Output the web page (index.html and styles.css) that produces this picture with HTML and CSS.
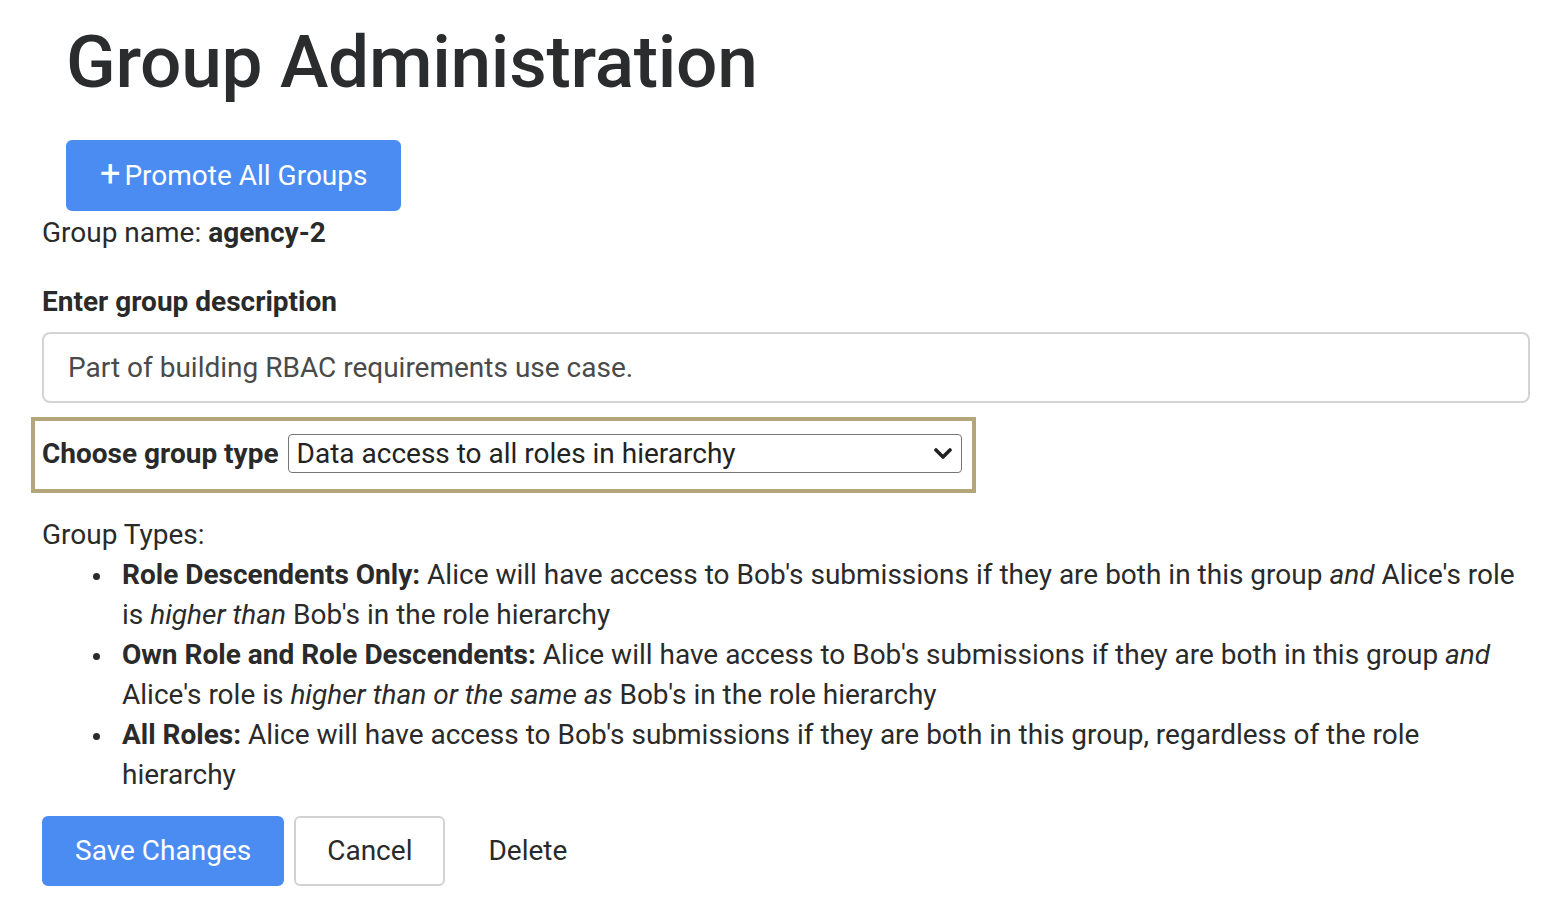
FILE: index.html
```html
<!DOCTYPE html>
<html lang="en">
<head>
  <meta charset="UTF-8">
  <meta name="viewport" content="width=device-width, initial-scale=1.0">
  <title>Group Administration</title>
  <link rel="stylesheet" href="styles.css">
</head>
<body>
  <div class="page">
    <div class="page-header">
      <h1>Group Administration</h1>
      <button class="btn btn-primary btn-promote"><span class="plus">+</span>Promote All Groups</button>
    </div>

    <div class="group-name">Group name: <strong>agency-2</strong></div>

    <label class="field-label" for="description">Enter group description</label>
    <input class="text-input" id="description" type="text" value="Part of building RBAC requirements use case.">

    <div class="type-box">
      <label class="type-label" for="group-type">Choose group type</label>
      <div class="select-wrap">
        <select class="type-select" id="group-type">
          <option>Data access to all roles in hierarchy</option>
          <option>Role Descendents Only</option>
          <option>Own Role and Role Descendents</option>
        </select>
        <svg class="chevron" width="18" height="12" viewBox="0 0 18 12">
          <path d="M2 2 L9 9 L16 2" fill="none" stroke="#222" stroke-width="3.6" stroke-linecap="round" stroke-linejoin="round"/>
        </svg>
      </div>
    </div>

    <div class="types">
      <div>Group Types:</div>
      <ul>
        <li><strong>Role Descendents Only:</strong> Alice will have access to Bob's submissions if they are both in this group <em>and</em> Alice's role is <em>higher than</em> Bob's in the role hierarchy</li>
        <li><strong>Own Role and Role Descendents:</strong> Alice will have access to Bob's submissions if they are both in this group <em>and</em> Alice's role is <em>higher than or the same as</em> Bob's in the role hierarchy</li>
        <li><strong>All Roles:</strong> Alice will have access to Bob's submissions if they are both in this group, regardless of the role hierarchy</li>
      </ul>
    </div>

    <div class="actions">
      <button class="btn btn-primary">Save Changes</button>
      <button class="btn btn-outline">Cancel</button>
      <button class="btn btn-link">Delete</button>
    </div>
  </div>
</body>
</html>
```

FILE: styles.css
```css
body {
  margin: 0;
  font-family: Roboto, 'Liberation Sans', sans-serif;
  font-size: 28px;
  line-height: 40px;
  color: #2a2a2a;
  background: #fff;
}

.page {
  padding: 0 36px 0 42px;
}

.page-header {
  padding-left: 24px;
}

h1 {
  margin: 0;
  padding-top: 14px;
  font-size: 73px;
  font-weight: 500;
  line-height: 96px;
  color: #2b2c2e;
  letter-spacing: -0.3px;
}

.btn {
  box-sizing: border-box;
  height: 70px;
  padding: 0 31px;
  font-family: inherit;
  font-size: 28px;
  line-height: 40px;
  border-radius: 6px;
  border: 2px solid transparent;
  cursor: pointer;
}

.btn-primary {
  background-color: #4a8cf2;
  border-color: #4a8cf2;
  color: #fff;
}

.btn-outline {
  background: #fff;
  border-color: #d2d2d2;
  color: #2a2a2a;
}

.btn-link {
  background: transparent;
  color: #2a2a2a;
}

.btn-promote {
  height: 71px;
  margin-top: 30px;
  padding: 0 32px;
}

.plus {
  font-size: 36px;
  line-height: 20px;
  margin-right: 4px;
  position: relative;
  top: 1px;
}

.group-name {
  margin-top: 2px;
}

.group-name strong,
.field-label,
.type-label,
.types strong {
  font-weight: 700;
}

.field-label {
  display: block;
  margin-top: 29px;
}

.text-input {
  display: block;
  box-sizing: border-box;
  width: 100%;
  height: 71px;
  margin-top: 10px;
  padding: 0 24px;
  font-family: inherit;
  font-size: 28px;
  color: #4a4a4a;
  border: 2px solid #d4d4d4;
  border-radius: 8px;
}

.type-box {
  display: inline-flex;
  align-items: center;
  gap: 9px;
  margin: 14px 0 0 -11px;
  padding: 13px 10px 15px 7px;
  border: 4px solid #b3a67b;
}

.select-wrap {
  position: relative;
}

.type-select {
  appearance: none;
  -webkit-appearance: none;
  box-sizing: border-box;
  width: 674px;
  height: 39px;
  padding: 0 40px 0 8px;
  font-family: inherit;
  font-size: 28px;
  color: #222;
  background: #fff;
  border: 1px solid #767676;
  border-radius: 4px;
}

.chevron {
  position: absolute;
  right: 10px;
  top: 14px;
  pointer-events: none;
}

.types {
  margin-top: 22px;
}

.types ul {
  margin: 0;
  padding-left: 80px;
  list-style: none;
}

.types li {
  position: relative;
}

.types li::before {
  content: "";
  position: absolute;
  left: -29px;
  top: 18px;
  width: 7px;
  height: 7px;
  border-radius: 50%;
  background: #2a2a2a;
}

.actions {
  display: flex;
  gap: 10px;
  margin-top: 21px;
}
```
